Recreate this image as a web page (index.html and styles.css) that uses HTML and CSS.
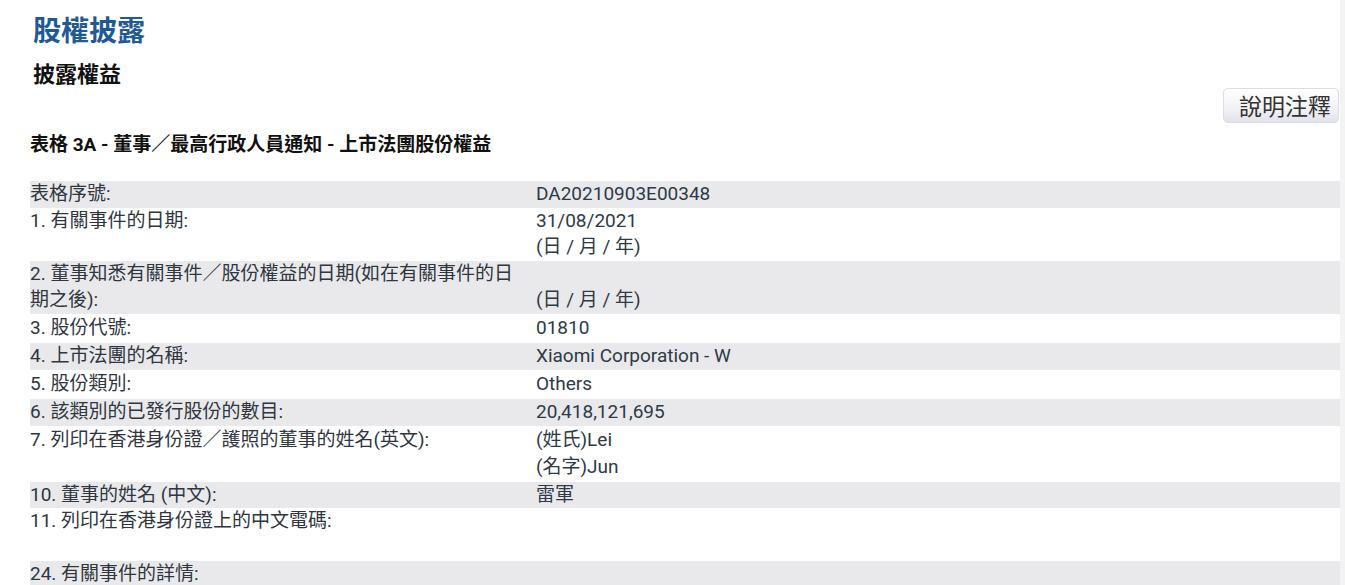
FILE: index.html
```html
<!DOCTYPE html>
<html lang="zh-Hant">
<head>
<meta charset="utf-8">
<title>股權披露</title>
<link rel="stylesheet" href="styles.css">
</head>
<body>
<div class="page">
  <h1 class="title">股權披露</h1>
  <h2 class="subtitle">披露權益</h2>
  <div class="toolbar"><button class="help-btn" type="button">說明注釋</button></div>
  <h3 class="form-heading">表格 3A - 董事／最高行政人員通知 - 上市法團股份權益</h3>
  <div class="form">
    <div class="row alt"><div class="label">表格序號:</div><div class="value">DA20210903E00348</div></div>
    <div class="row"><div class="label">1. 有關事件的日期:</div><div class="value">31/08/2021<br>(日 / 月 / 年)</div></div>
    <div class="row alt"><div class="label">2. 董事知悉有關事件／股份權益的日期(如在有關事件的日期之後):</div><div class="value bottom">(日 / 月 / 年)</div></div>
    <div class="row tall"><div class="label">3. 股份代號:</div><div class="value">01810</div></div>
    <div class="row alt"><div class="label">4. 上市法團的名稱:</div><div class="value">Xiaomi Corporation - W</div></div>
    <div class="row tall"><div class="label">5. 股份類別:</div><div class="value">Others</div></div>
    <div class="row alt"><div class="label">6. 該類別的已發行股份的數目:</div><div class="value">20,418,121,695</div></div>
    <div class="row tall"><div class="label">7. 列印在香港身份證／護照的董事的姓名(英文):</div><div class="value">(姓氏)Lei<br>(名字)Jun</div></div>
    <div class="row alt"><div class="label">10. 董事的姓名 (中文):</div><div class="value">雷軍</div></div>
    <div class="row"><div class="label">11. 列印在香港身份證上的中文電碼:<br>&nbsp;</div><div class="value"></div></div>
    <div class="row alt"><div class="label">24. 有關事件的詳情:</div><div class="value"></div></div>
  </div>
</div>
</body>
</html>
```
FILE: styles.css
```css
html {
  background: #f3f3f3;
}
body {
  margin: 0;
  font-family: Roboto, "Noto Sans CJK TC", sans-serif;
  color: #2f3640;
}
.page {
  width: 1340px;
  min-height: 585px;
  background: #ffffff;
  padding-left: 30px;
  box-sizing: border-box;
  overflow: hidden;
}
.title {
  margin: 0;
  padding: 12px 0 0 3px;
  font-family: "Noto Sans CJK TC", sans-serif;
  font-size: 28px;
  line-height: 34px;
  font-weight: 700;
  color: #1f5a94;
}
.subtitle {
  margin: 0;
  padding: 11px 0 0 3px;
  font-family: "Noto Sans CJK TC", sans-serif;
  font-size: 22px;
  line-height: 31px;
  font-weight: 700;
  color: #111;
}
.toolbar {
  display: flex;
  justify-content: flex-end;
  height: 35px;
}
.help-btn {
  width: 116px;
  height: 35px;
  margin-right: 1px;
  border: 1px solid #dcdce6;
  border-radius: 5px;
  background: linear-gradient(#ffffff, #f3f3f7 55%, #e2e2ec);
  font-family: "Noto Sans CJK TC", sans-serif;
  font-size: 23px;
  line-height: 33px;
  color: #333;
  padding: 0 0 0 15px;
  text-align: left;
  white-space: nowrap;
}
.form-heading {
  margin: 0;
  padding-top: 8px;
  font-family: Roboto, "Noto Sans CJK TC", sans-serif;
  font-size: 19px;
  line-height: 27px;
  font-weight: 700;
  color: #111;
}
.form {
  margin-top: 23px;
  font-size: 19px;
  line-height: 26.5px;
}
.row {
  display: grid;
  grid-template-columns: 506px 1fr;
  background: #ffffff;
}
.row.alt {
  background: #e9e9eb;
}
.row.tall {
  padding: 1.5px 0;
}
.label {
  padding-right: 8px;
}
.value {
  color: #2d3a48;
}
.value.bottom {
  align-self: end;
}
```
